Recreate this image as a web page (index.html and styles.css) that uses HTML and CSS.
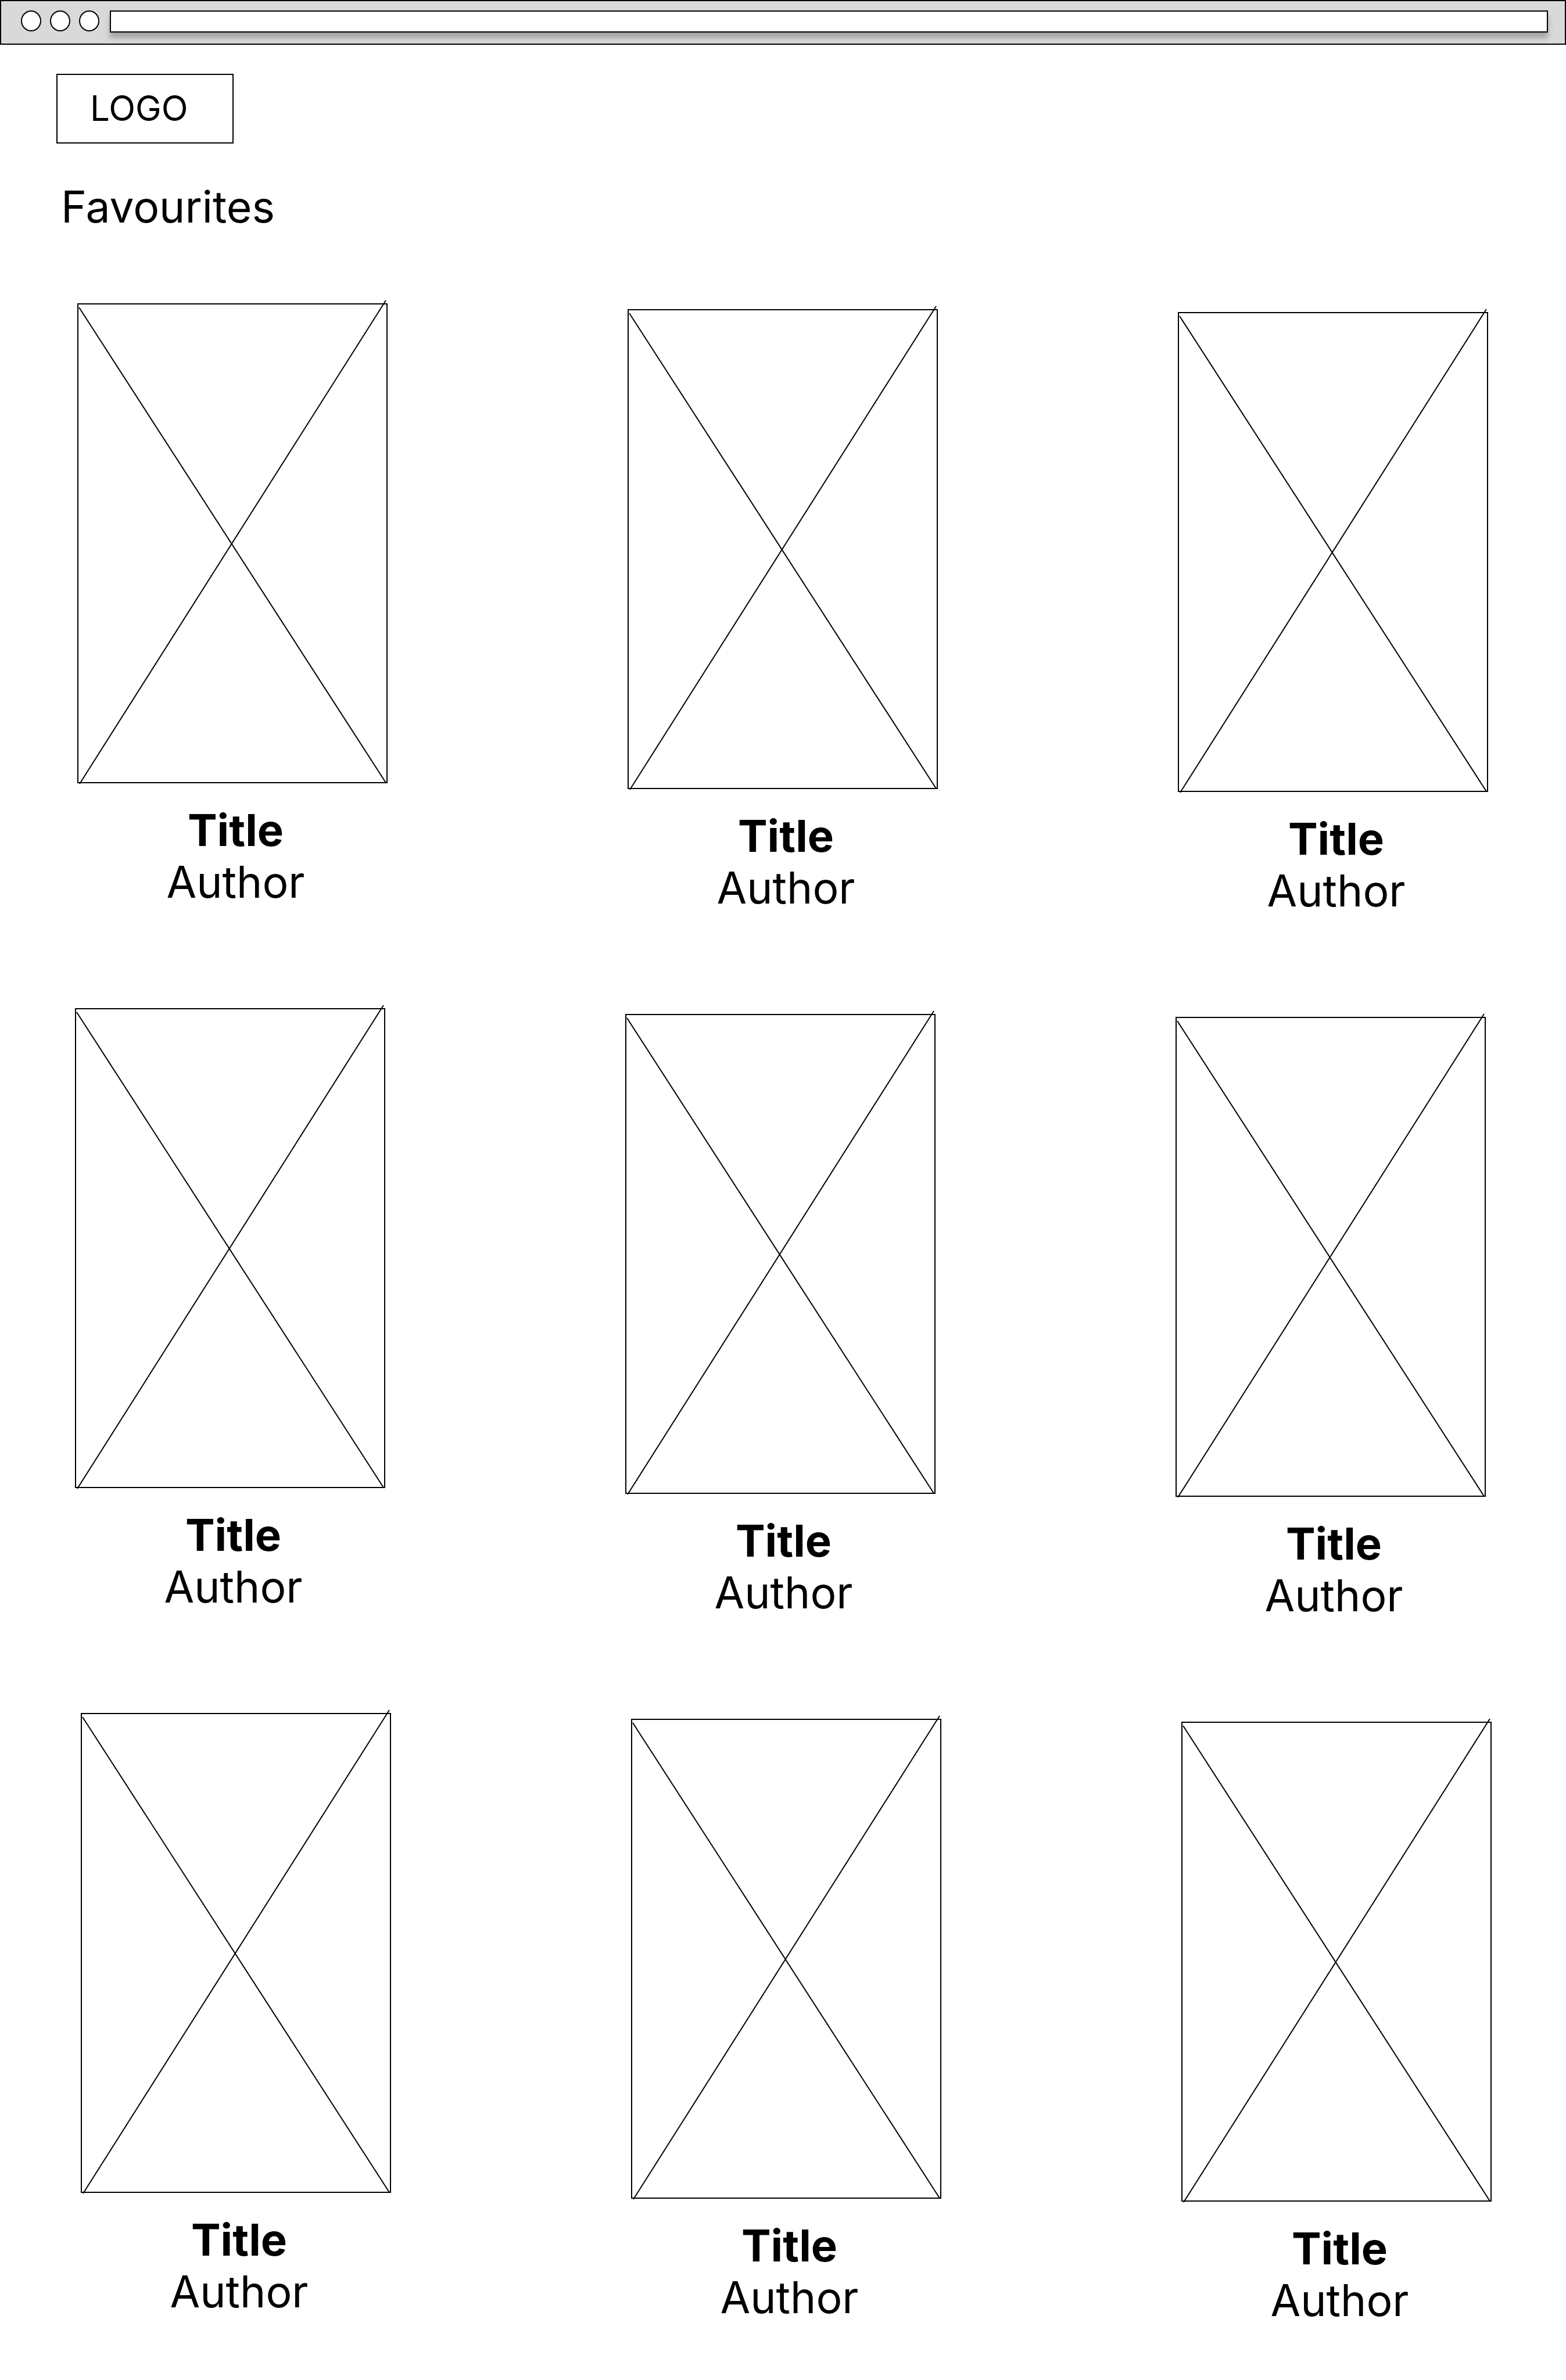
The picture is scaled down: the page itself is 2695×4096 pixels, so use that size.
FILE: index.html
```html
<!DOCTYPE html>
<html lang="en">
<head>
<meta charset="utf-8">
<title>Favourites</title>
<link rel="stylesheet" href="styles.css">
</head>
<body>
<svg class="defs" width="0" height="0" aria-hidden="true">
  <symbol id="cover" viewBox="0 0 534 826" overflow="visible">
    <rect x="1" y="1" width="532" height="824"/>
    <path d="M3 7L531 825M531 -5L4 827"/>
  </symbol>
</svg>

<div class="browser-bar">
  <div class="window-controls">
    <button class="window-button" type="button" aria-label="Close"></button>
    <button class="window-button" type="button" aria-label="Minimise"></button>
    <button class="window-button" type="button" aria-label="Maximise"></button>
  </div>
  <input class="address" type="text" aria-label="Address">
</div>

<header class="header">
  <a class="logo" href="#">LOGO</a>
</header>

<main>
  <h1 class="heading">Favourites</h1>
  <div class="shelves">
    <ul class="shelf shelf-first">
      <li class="book"><svg class="cover" viewBox="0 0 534 826" aria-hidden="true"><use href="#cover"/></svg><div class="caption"><h2 class="title">Title</h2><p class="author">Author</p></div></li>
      <li class="book"><svg class="cover" viewBox="0 0 534 826" aria-hidden="true"><use href="#cover"/></svg><div class="caption"><h2 class="title">Title</h2><p class="author">Author</p></div></li>
      <li class="book"><svg class="cover" viewBox="0 0 534 826" aria-hidden="true"><use href="#cover"/></svg><div class="caption"><h2 class="title">Title</h2><p class="author">Author</p></div></li>
    </ul>
    <ul class="shelf shelf-second">
      <li class="book"><svg class="cover" viewBox="0 0 534 826" aria-hidden="true"><use href="#cover"/></svg><div class="caption"><h2 class="title">Title</h2><p class="author">Author</p></div></li>
      <li class="book"><svg class="cover" viewBox="0 0 534 826" aria-hidden="true"><use href="#cover"/></svg><div class="caption"><h2 class="title">Title</h2><p class="author">Author</p></div></li>
      <li class="book"><svg class="cover" viewBox="0 0 534 826" aria-hidden="true"><use href="#cover"/></svg><div class="caption"><h2 class="title">Title</h2><p class="author">Author</p></div></li>
    </ul>
    <ul class="shelf shelf-third">
      <li class="book"><svg class="cover" viewBox="0 0 534 826" aria-hidden="true"><use href="#cover"/></svg><div class="caption"><h2 class="title">Title</h2><p class="author">Author</p></div></li>
      <li class="book"><svg class="cover" viewBox="0 0 534 826" aria-hidden="true"><use href="#cover"/></svg><div class="caption"><h2 class="title">Title</h2><p class="author">Author</p></div></li>
      <li class="book"><svg class="cover" viewBox="0 0 534 826" aria-hidden="true"><use href="#cover"/></svg><div class="caption"><h2 class="title">Title</h2><p class="author">Author</p></div></li>
    </ul>
  </div>
</main>
</body>
</html>
```
FILE: styles.css
```css
* {
  box-sizing: border-box;
}

body {
  margin: 0;
  background: #fff;
  color: #000;
  font-family: Inter, "Liberation Sans", sans-serif;
  font-optical-sizing: none;
}

.defs {
  display: block;
}

/* Browser chrome */
.browser-bar {
  display: flex;
  align-items: flex-start;
  gap: 18px;
  padding: 16px 29px 19px 34px;
  border: 2px solid #000;
  background: #d9d9d9;
}

.window-controls {
  display: flex;
  gap: 15px;
}

.window-button {
  width: 35px;
  height: 36px;
  padding: 0;
  border: 2px solid #000;
  border-radius: 50%;
  background: #fff;
}

.address {
  flex: 1;
  min-width: 0;
  height: 38px;
  padding: 0 12px;
  border: 2px solid #000;
  border-radius: 0;
  background: #fff;
  box-shadow: 0 9px 9px rgba(0, 0, 0, 0.25);
  font: inherit;
  font-size: 24px;
}

/* Header */
.header {
  display: flex;
  padding: 50px 97px 0;
}

.logo {
  width: 305px;
  padding: 21px 0 23px 56px;
  border: 2px solid #000;
  color: inherit;
  font-size: 60px;
  line-height: 72px;
  text-decoration: none;
}

.heading {
  margin: 64px 105px 121px;
  font-size: 75px;
  font-weight: 400;
  line-height: 90px;
}

/* Book grid */
.shelves {
  display: flex;
  flex-direction: column;
  gap: 157px;
  padding-bottom: 90px;
}

.shelf {
  display: flex;
  justify-content: space-between;
  margin: 0;
  list-style: none;
}

.shelf-first {
  padding: 0 134px 0 133px;
}

.shelf-second {
  padding: 0 138px 0 129px;
}

.shelf-third {
  padding: 0 128px 0 139px;
}

.book {
  flex: 0 1 534px;
}

.book:nth-child(2) {
  padding-top: 10px;
}

.book:nth-child(3) {
  padding-top: 15px;
}

.cover {
  display: block;
  width: 100%;
  overflow: visible;
  fill: none;
  stroke: #000;
  stroke-width: 2;
}

.caption {
  padding: 35px 0 0 11px;
  text-align: center;
}

.title,
.author {
  margin: 0;
  line-height: 90px;
}

.title {
  font-size: 76px;
  font-weight: 700;
}

.author {
  font-size: 75px;
  font-weight: 400;
}
```
